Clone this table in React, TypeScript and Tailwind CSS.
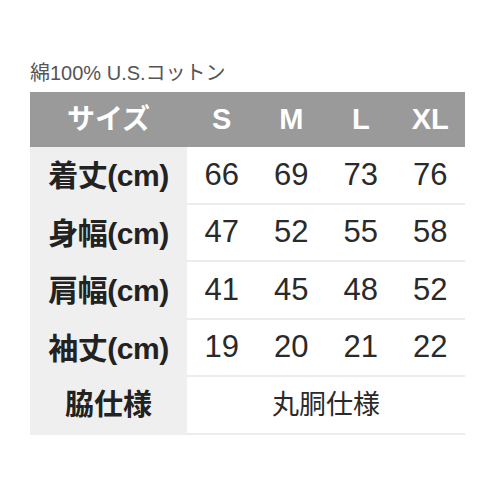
import React from 'react';

interface SizeRow {
  label: string;
  values: string[];
}

const sizes = ['S', 'M', 'L', 'XL'];

const rows: SizeRow[] = [
  { label: '着丈(cm)', values: ['66', '69', '73', '76'] },
  { label: '身幅(cm)', values: ['47', '52', '55', '58'] },
  { label: '肩幅(cm)', values: ['41', '45', '48', '52'] },
  { label: '袖丈(cm)', values: ['19', '20', '21', '22'] },
];

const font = { fontFamily: '"Liberation Sans", "Noto Sans CJK JP", sans-serif' };

const App: React.FC = () => {
  return (
    <div className="w-[500px] h-[500px] bg-white" style={font}>
      <div className="pl-[30px] pt-[61px]">
        <p className="text-[20px] leading-[24px] text-[#555]">綿100% U.S.コットン</p>

        <div className="mt-[7px] w-[435px] grid grid-cols-[157px_repeat(4,1fr)]">
          {/* header */}
          <div className="h-[55px] bg-[#9a9a9a] flex items-center justify-center text-white font-bold text-[28px]">
            サイズ
          </div>
          {sizes.map((s) => (
            <div
              key={s}
              className="h-[55px] bg-[#9a9a9a] flex items-center justify-center text-white font-bold text-[29px]"
            >
              {s}
            </div>
          ))}

          {/* rows */}
          {rows.map((row) => (
            <React.Fragment key={row.label}>
              <div className="h-[57.5px] bg-[#efefef] flex items-center justify-center text-[#222] font-bold text-[30px] tracking-[-0.5px]">
                {row.label}
              </div>
              {row.values.map((v, i) => (
                <div
                  key={i}
                  className="h-[57.5px] border-b-2 border-[#ececec] flex items-center justify-center text-[#2a2a2a] text-[31px]"
                >
                  {v}
                </div>
              ))}
            </React.Fragment>
          ))}

          <div className="h-[57.5px] bg-[#efefef] flex items-center justify-center text-[#222] font-bold text-[29px]">
            脇仕様
          </div>
          <div className="col-span-4 h-[57.5px] border-b-2 border-[#ececec] flex items-center justify-center text-[#2a2a2a] text-[27px]">
            丸胴仕様
          </div>
        </div>
      </div>
    </div>
  );
};

export default App;
